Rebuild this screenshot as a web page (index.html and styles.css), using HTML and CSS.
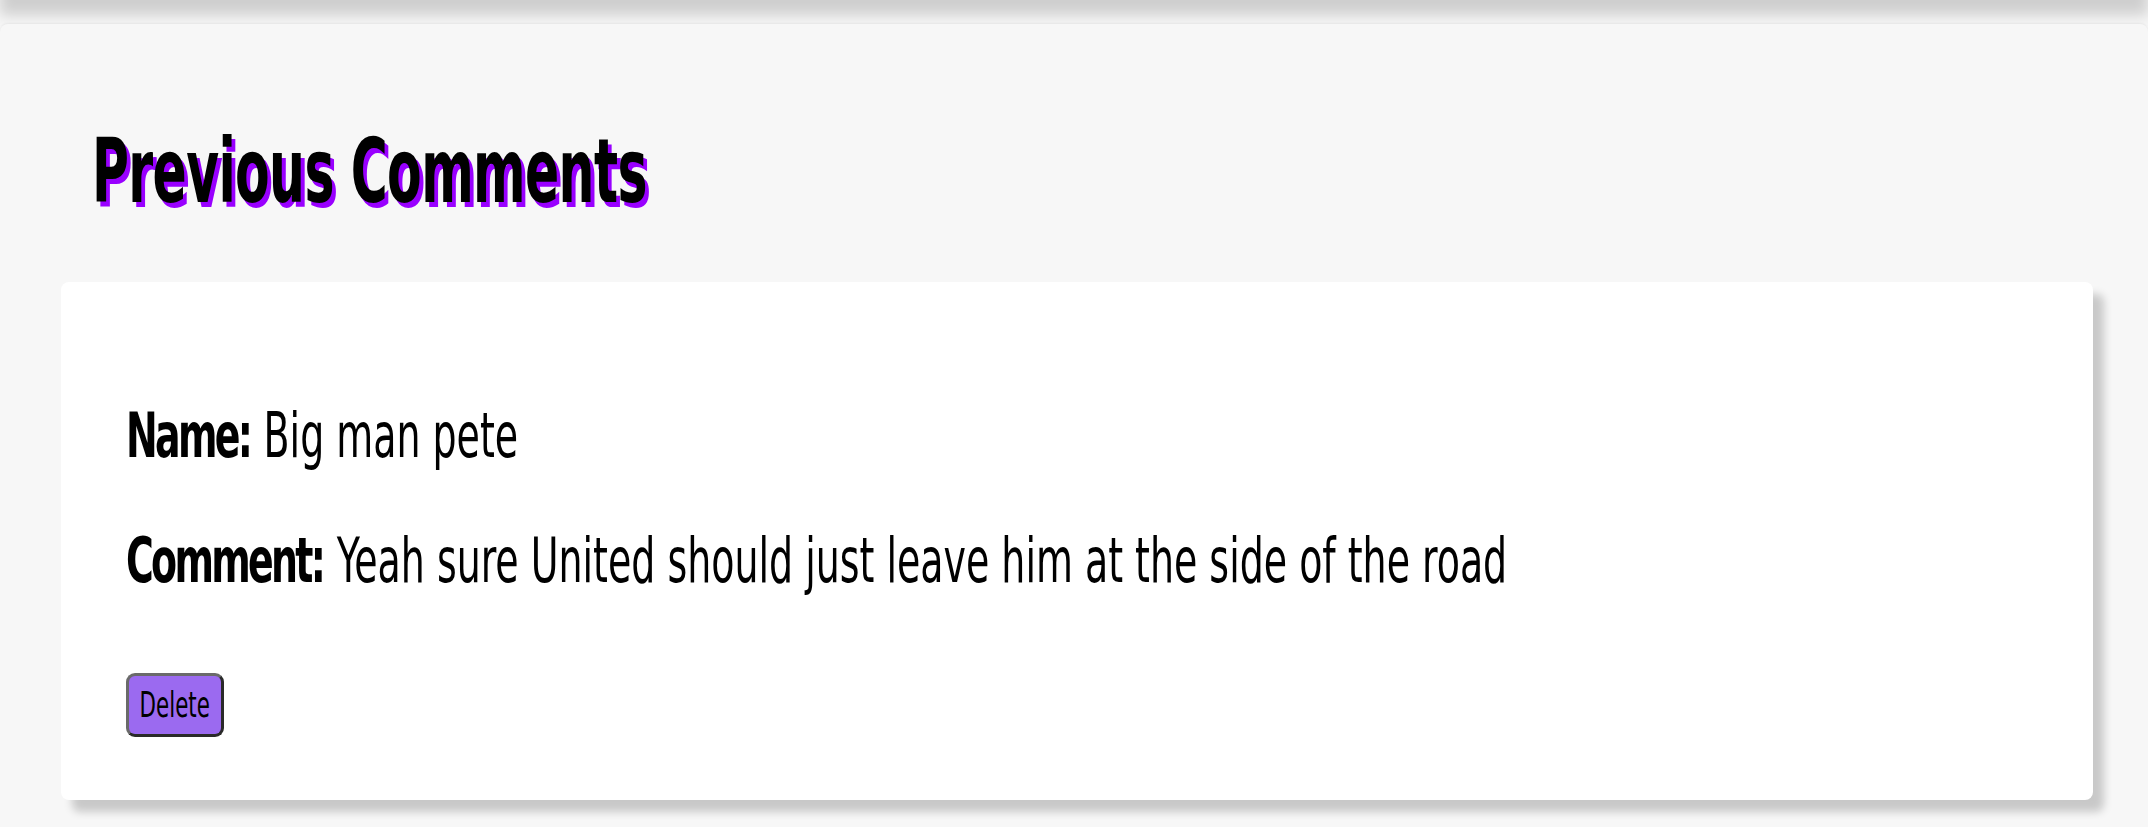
FILE: index.html
```html
<!DOCTYPE html>
<html lang="en">
<head>
<meta charset="utf-8">
<title>Previous Comments</title>
<link rel="stylesheet" href="styles.css">
</head>
<body>
<header class="topbar"></header>
<main class="page">
  <h1 class="title">Previous Comments</h1>
  <section class="card">
    <p class="line"><strong class="label">Name:</strong> Big man pete</p>
    <p class="line line-comment"><strong class="label">Comment:</strong> Yeah sure United should just leave him at the side of the road</p>
    <button class="delete" type="button"><span class="delete-text">Delete</span></button>
  </section>
</main>
</body>
</html>
```
FILE: styles.css
```css
html, body {
  margin: 0;
  padding: 0;
}
body {
  background: #f6f6f6;
  font-family: "DejaVu Sans Condensed", "DejaVu Sans", "Liberation Sans", sans-serif;
  font-stretch: condensed;
  color: #000;
  overflow: hidden;
}
.topbar {
  display: block;
  height: 40px;
  margin-top: -40px;
  background: #cfcfcf;
  box-shadow: 0 15px 14px rgba(0, 0, 0, 0.16);
}
.page {
  display: block;
  margin-top: 24px;
  padding: 97px 55px 40px 61px;
  background: #f7f7f7;
  border-radius: 8px;
  box-shadow: 0 -1px 2px rgba(0, 0, 0, 0.05);
}
.title {
  margin: 0 0 61px 31px;
  font-size: 89px;
  line-height: 100px;
  font-weight: 700;
  letter-spacing: -1px;
  text-shadow: 6px 5px 0 #9900ff;
  transform: scaleX(0.63);
  transform-origin: left center;
  white-space: nowrap;
}
.card {
  background: #fff;
  border-radius: 8px;
  padding: 119px 65px 63px;
  box-shadow: 11px 12px 9px rgba(0, 0, 0, 0.19);
}
.line {
  margin: 0;
  font-size: 62px;
  line-height: 70px;
  transform: scaleX(0.68);
  transform-origin: left center;
  white-space: nowrap;
}
.line-comment {
  margin-top: 55px;
}
.label {
  font-weight: 700;
  letter-spacing: -4px;
  margin-right: 2px;
}
.delete {
  display: flex;
  align-items: center;
  justify-content: center;
  margin-top: 77px;
  height: 64px;
  width: 98px;
  padding: 0;
  box-sizing: border-box;
  font-family: inherit;
  color: #000;
  background: #9b6af0;
  border: 3px solid;
  border-color: #6a6a6a #2a2a2a #2a2a2a #6a6a6a;
  border-radius: 9px;
  overflow: visible;
}
.delete-text {
  display: inline-block;
  font-size: 35px;
  line-height: 40px;
  transform: scaleX(0.68);
  white-space: nowrap;
}
```
